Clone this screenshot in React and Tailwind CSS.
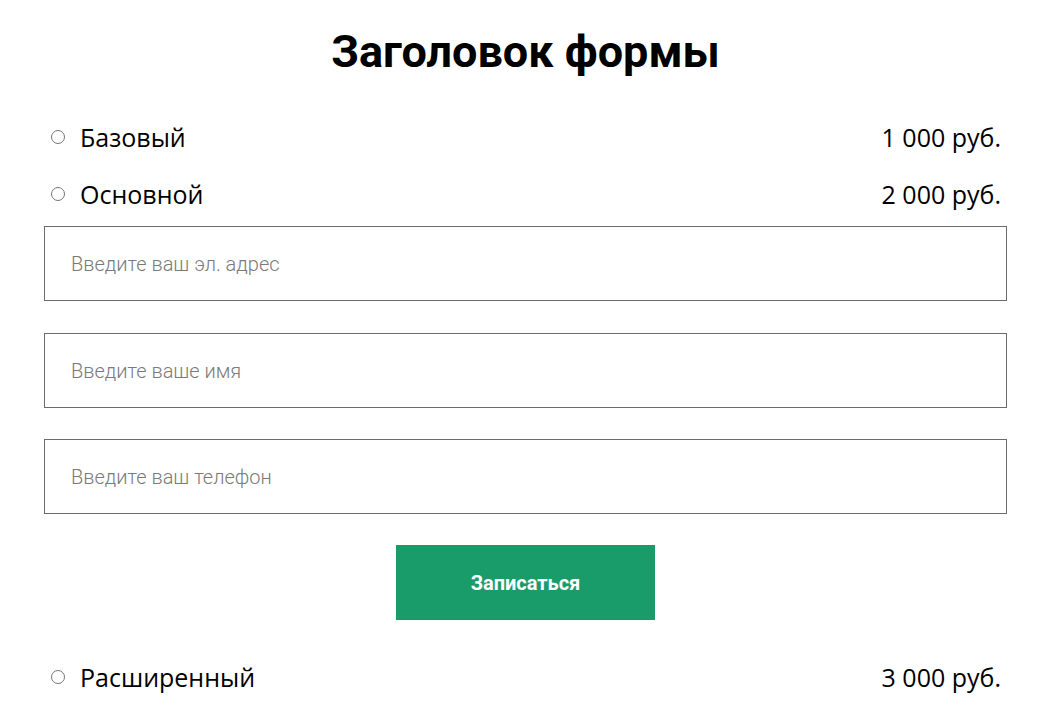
import React from "react";

function Row({ label, price }) {
  return (
    <label className="flex h-[57px] items-center justify-between pl-[7px] pr-[6px]">
      <span className="flex items-center">
        <span className="mr-[15px] -mt-[2px] inline-block h-[14px] w-[14px] rounded-full border border-[#767676] bg-white" />
        <span className="text-[25px] text-black" style={{ fontFamily: '"Open Sans", sans-serif' }}>{label}</span>
      </span>
      <span className="text-[25px] text-black" style={{ fontFamily: '"Open Sans", sans-serif' }}>{price}</span>
    </label>
  );
}

function Field({ placeholder, className = "" }) {
  return (
    <input
      type="text"
      placeholder={placeholder}
      className={"block h-[75px] w-full border border-[#6b6b6b] bg-white px-[26px] text-[20px] font-light text-black outline-none placeholder:text-[#7a7a7a] " + className}
      style={{ fontFamily: 'Roboto, sans-serif' }}
    />
  );
}

export default function App() {
  return (
    <div className="min-h-[717px] bg-white">
      <div className="ml-[44px] w-[963px] pt-[22px]">
        <h1 className="text-center text-[45px] font-bold leading-[60px] text-black" style={{ fontFamily: 'Roboto, sans-serif' }}>
          Заголовок формы
        </h1>
        <div className="mt-[27px]">
          <Row label="Базовый" price="1 000 руб." />
          <Row label="Основной" price="2 000 руб." />
        </div>
        <div className="mt-[3px] flex flex-col">
          <Field placeholder="Введите ваш эл. адрес" />
          <Field placeholder="Введите ваше имя" className="mt-[32px]" />
          <Field placeholder="Введите ваш телефон" className="mt-[31px]" />
        </div>
        <div className="mt-[31px] flex justify-center">
          <button
            className="h-[75px] w-[259px] bg-[#1a9c6a] text-[20px] font-bold text-white"
            style={{ fontFamily: 'Roboto, sans-serif' }}
          >
            Записаться
          </button>
        </div>
        <div className="mt-[29px]">
          <Row label="Расширенный" price="3 000 руб." />
        </div>
      </div>
    </div>
  );
}
